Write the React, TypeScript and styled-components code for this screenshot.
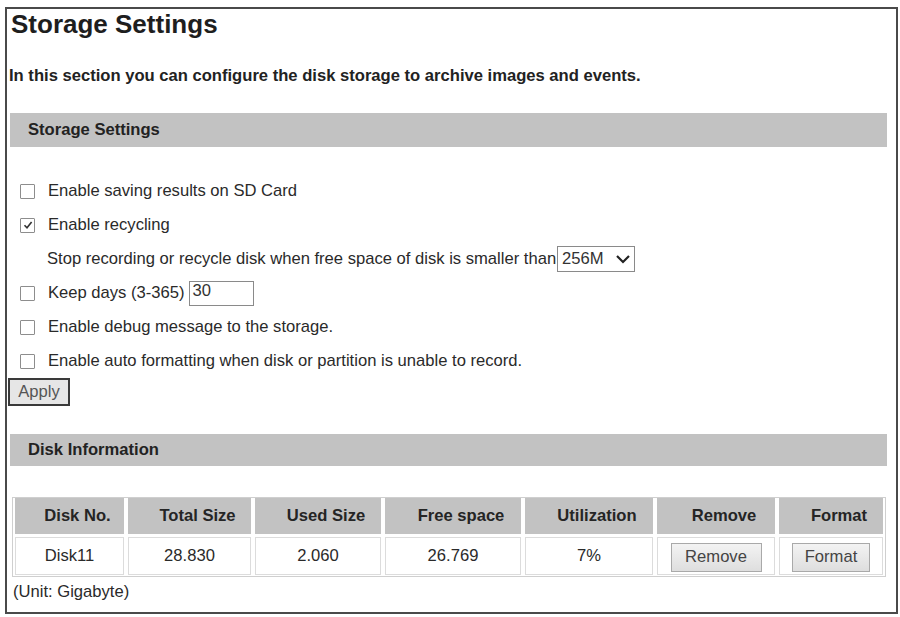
import React from "react";
import styled, { createGlobalStyle } from "styled-components";

const Global = createGlobalStyle`
  html, body { margin: 0; padding: 0; background: #ffffff; }
  body { font-family: "Liberation Sans", Arial, sans-serif; color: #222; }
`;

const Frame = styled.div`
  box-sizing: border-box;
  margin: 7px 0 0 5px;
  width: 893px;
  height: 607px;
  border: 2px solid #4a4a4a;
  padding: 0 9px 0 1px;
  display: flex;
  flex-direction: column;
`;

const Title = styled.h1`
  margin: 0 0 0 3px;
  font-size: 26px;
  line-height: 30px;
  font-weight: bold;
  color: #1e1e1e;
`;

const Intro = styled.p`
  margin: 27px 0 0 1px;
  font-size: 16.6px;
  line-height: 20px;
  font-weight: bold;
  color: #222;
`;

const SectionBar = styled.div<{ $h: number; $top: number }>`
  margin: ${(p) => p.$top}px 0 0 2px;
  height: ${(p) => p.$h}px;
  background: #c2c2c2;
  display: flex;
  align-items: center;
  padding-left: 18px;
  font-size: 16.6px;
  font-weight: bold;
  color: #222;
`;

const Options = styled.div`
  margin: 27px 0 0 12px;
  display: flex;
  flex-direction: column;
`;

const OptionRow = styled.div<{ $indent?: boolean }>`
  height: 34px;
  display: flex;
  align-items: center;
  gap: 13px;
  padding-left: ${(p) => (p.$indent ? "27px" : "0")};
  font-size: 16.6px;
  color: #2a2a2a;
`;

const Box = styled.span`
  box-sizing: border-box;
  width: 15px;
  height: 15px;
  border: 1px solid #8d8d8d;
  border-radius: 1px;
  background: #fff;
  display: inline-flex;
  align-items: center;
  justify-content: center;
  flex: none;
`;

const Label = styled.span`
  display: inline-flex;
  align-items: center;
  white-space: nowrap;
`;

const SelectBox = styled.span`
  box-sizing: border-box;
  display: inline-flex;
  align-items: center;
  justify-content: space-between;
  width: 78px;
  height: 26px;
  border: 1px solid #8a8a8a;
  padding: 0 3px 0 4px;
  margin-left: 1px;
  font-size: 16.6px;
  color: #333;
`;

const TextBox = styled.span`
  box-sizing: border-box;
  display: inline-block;
  width: 65px;
  height: 25px;
  border: 1px solid #8a8a8a;
  padding: 0 0 0 3px;
  margin-left: 4px;
  font-size: 16.6px;
  line-height: 18px;
  color: #333;
`;

const ApplyButton = styled.button`
  box-sizing: border-box;
  align-self: flex-start;
  margin: 0;
  width: 62px;
  height: 28px;
  border: 2px solid #3a3a3a;
  background: #e6e6e6;
  font-family: "Liberation Sans", Arial, sans-serif;
  font-size: 16.6px;
  color: #555;
  padding: 0;
`;

const Table = styled.table`
  box-sizing: border-box;
  margin: 31px 0 0 4px;
  width: 874px;
  border: 1px solid #cfcfcf;
  border-spacing: 0;
  table-layout: fixed;
`;

const HeadCell = styled.th`
  height: 36px;
  background: #c2c2c2;
  background-clip: padding-box;
  border-style: solid;
  border-color: #fff;
  border-width: 0 2px 1px 2px;
  font-size: 16.6px;
  font-weight: bold;
  color: #252525;
  text-align: center;
  padding: 0 2px 0 18px;
`;

const Cell = styled.td`
  height: 38px;
  background: #fff;
  border-style: solid;
  border-color: #fff;
  border-width: 2px 2px 1px 2px;
  box-shadow: inset 0 0 0 1px #dcdcdc;
  font-size: 16.6px;
  color: #2a2a2a;
  text-align: center;
  padding: 0;
`;

const TableButton = styled.button<{ $w: number }>`
  box-sizing: border-box;
  width: ${(p) => p.$w}px;
  height: 29px;
  border: 1px solid #a9a9a9;
  background: linear-gradient(#f3f3f3, #dedede);
  font-family: "Liberation Sans", Arial, sans-serif;
  font-size: 16.6px;
  color: #444;
  padding: 0;
  margin-top: 2px;
`;

const Unit = styled.div`
  margin: 5px 0 0 5px;
  font-size: 16.6px;
  line-height: 20px;
  color: #2a2a2a;
`;

const Check = () => (
  <svg width="10" height="10" viewBox="0 0 10 10">
    <path d="M1.5 5.2 L4 7.8 L8.6 2" fill="none" stroke="#333" strokeWidth="1.6" />
  </svg>
);

const Chevron = () => (
  <svg width="16" height="10" viewBox="0 0 16 10">
    <path d="M2 2 L8 8 L14 2" fill="none" stroke="#222" strokeWidth="2.2" />
  </svg>
);

const columns = [
  { name: "Disk No.", w: 113 },
  { name: "Total Size", w: 127 },
  { name: "Used Size", w: 130 },
  { name: "Free space", w: 140 },
  { name: "Utilization", w: 132 },
  { name: "Remove", w: 122 },
  { name: "Format", w: 108 },
];

export default function App() {
  return (
    <>
      <Global />
      <Frame>
        <Title>Storage Settings</Title>
        <Intro>In this section you can configure the disk storage to archive images and events.</Intro>
        <SectionBar $h={34} $top={27}>Storage Settings</SectionBar>
        <Options>
          <OptionRow>
            <Box />
            <Label>Enable saving results on SD Card</Label>
          </OptionRow>
          <OptionRow>
            <Box>
              <Check />
            </Box>
            <Label>Enable recycling</Label>
          </OptionRow>
          <OptionRow $indent>
            <Label>
              Stop recording or recycle disk when free space of disk is smaller than
              <SelectBox>
                256M
                <Chevron />
              </SelectBox>
            </Label>
          </OptionRow>
          <OptionRow>
            <Box />
            <Label>
              Keep days (3-365)
              <TextBox>30</TextBox>
            </Label>
          </OptionRow>
          <OptionRow>
            <Box />
            <Label>Enable debug message to the storage.</Label>
          </OptionRow>
          <OptionRow>
            <Box />
            <Label>Enable auto formatting when disk or partition is unable to record.</Label>
          </OptionRow>
        </Options>
        <ApplyButton>Apply</ApplyButton>
        <SectionBar $h={32} $top={28}>Disk Information</SectionBar>
        <Table>
          <colgroup>
            {columns.map((c) => (
              <col key={c.name} style={{ width: c.w }} />
            ))}
          </colgroup>
          <thead>
            <tr>
              {columns.map((c) => (
                <HeadCell key={c.name}>{c.name}</HeadCell>
              ))}
            </tr>
          </thead>
          <tbody>
            <tr>
              <Cell>Disk11</Cell>
              <Cell>28.830</Cell>
              <Cell>2.060</Cell>
              <Cell>26.769</Cell>
              <Cell>7%</Cell>
              <Cell>
                <TableButton $w={91}>Remove</TableButton>
              </Cell>
              <Cell>
                <TableButton $w={78}>Format</TableButton>
              </Cell>
            </tr>
          </tbody>
        </Table>
        <Unit>(Unit: Gigabyte)</Unit>
      </Frame>
    </>
  );
}
